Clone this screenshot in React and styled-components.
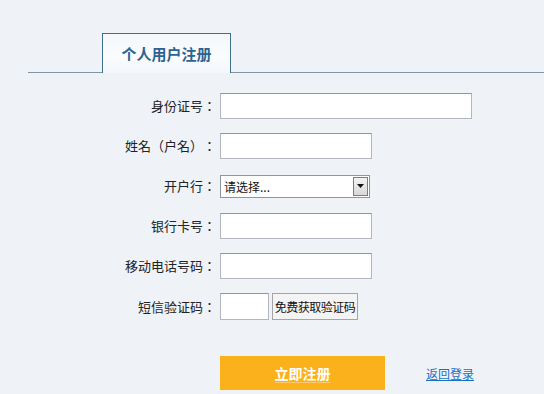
import React from "react";
import styled, { createGlobalStyle } from "styled-components";

const Global = createGlobalStyle`
  html, body { margin: 0; padding: 0; }
  body {
    background: #eff3f8;
    font-family: "Liberation Sans", "Noto Sans CJK SC", sans-serif;
    color: #222;
    width: 544px;
    height: 394px;
    overflow: hidden;
  }
`;

const Page = styled.div`
  padding-top: 33px;
`;

const TabBar = styled.div`
  display: flex;
  margin-left: 28px;
  padding-left: 74px;
  border-bottom: 1px solid #8095a4;
  height: 39px;
`;

const Tab = styled.div`
  width: 129px;
  height: 40px;
  box-sizing: border-box;
  border: 1px solid #3f7088;
  border-bottom: none;
  background: linear-gradient(#f4f8fb, #fafcfe 60%, #f3f7fb);
  display: flex;
  align-items: center;
  justify-content: center;
  font-family: "Noto Sans CJK SC", sans-serif;
  font-weight: 700;
  font-size: 15px;
  color: #2d6391;
  margin-bottom: -1px;
  padding-bottom: 1px;
`;

const Form = styled.div`
  display: grid;
  grid-template-columns: 216px 1fr;
  column-gap: 4px;
  row-gap: 14px;
  padding-top: 20px;
  align-items: center;
`;

const Label = styled.label`
  text-align: right;
  font-family: "Noto Sans CJK TC", "Noto Sans CJK SC", sans-serif;
  text-spacing-trim: space-all;
  font-size: 13px;
  color: #222;
  height: ${(p) => p.$h || 26}px;
  line-height: ${(p) => p.$h || 26}px;
`;

const Field = styled.div`
  display: flex;
  gap: 3px;
  align-items: center;
  height: ${(p) => p.$h || 26}px;
`;

const Input = styled.input`
  box-sizing: border-box;
  width: ${(p) => p.$w}px;
  height: ${(p) => p.$h || 26}px;
  border: 1px solid #b3b7bd;
  border-top-color: #8f959c;
  background: #fff;
  margin: 0;
  padding: 0 3px;
  outline: none;
`;

const Select = styled.div`
  box-sizing: border-box;
  width: 150px;
  height: 23px;
  border: 1px solid #8f959c;
  background: #fff;
  display: flex;
  align-items: center;
  justify-content: space-between;
  padding: 1px;
  font-family: "Noto Sans CJK SC", sans-serif;
  font-size: 12px;
  color: #111;
`;

const SelectText = styled.span`
  padding-left: 2px;
`;

const Arrow = styled.span`
  width: 15px;
  height: 19px;
  box-sizing: border-box;
  border: 1px solid #7d7d7d;
  background: linear-gradient(#f2f2f2, #d9d9d9);
  display: flex;
  align-items: center;
  justify-content: center;
`;

const SmsButton = styled.button`
  box-sizing: border-box;
  width: 86px;
  height: 27px;
  margin: 0;
  padding: 0;
  border: 1px solid #a5a5a5;
  background: #f4f4f4;
  font-family: "Noto Sans CJK SC", sans-serif;
  font-size: 12px;
  color: #111;
  letter-spacing: -0.5px;
`;

const Actions = styled.div`
  display: flex;
  align-items: center;
  padding-left: 220px;
  padding-top: 36px;
  gap: 41px;
`;

const Submit = styled.button`
  width: 165px;
  height: 34px;
  border: none;
  margin: 0;
  background: #fbb11b;
  color: #fff;
  font-family: "Noto Sans CJK SC", sans-serif;
  font-size: 14px;
  font-weight: 700;
  text-decoration: underline;
  text-decoration-color: rgba(255, 255, 255, 0.35);
  text-underline-offset: 3px;
`;

const BackLink = styled.a`
  font-family: "Noto Sans CJK SC", sans-serif;
  font-size: 12px;
  color: #1a6fc4;
  text-decoration: underline;
  margin-top: 1px;
`;

export default function App() {
  return (
    <>
      <Global />
      <Page>
        <TabBar>
          <Tab>个人用户注册</Tab>
        </TabBar>
        <Form>
          <Label>身份证号：</Label>
          <Field>
            <Input $w={252} />
          </Field>
          <Label>姓名（户名）：</Label>
          <Field>
            <Input $w={152} />
          </Field>
          <Label>开户行：</Label>
          <Field>
            <Select>
              <SelectText>请选择...</SelectText>
              <Arrow>
                <svg width="7" height="4" viewBox="0 0 7 4">
                  <path d="M0 0h7L3.5 4z" fill="#111" />
                </svg>
              </Arrow>
            </Select>
          </Field>
          <Label>银行卡号：</Label>
          <Field>
            <Input $w={152} />
          </Field>
          <Label>移动电话号码：</Label>
          <Field>
            <Input $w={152} />
          </Field>
          <Label $h={27}>短信验证码：</Label>
          <Field $h={27}>
            <Input $w={49} $h={27} />
            <SmsButton>免费获取验证码</SmsButton>
          </Field>
        </Form>
        <Actions>
          <Submit>立即注册</Submit>
          <BackLink href="#">返回登录</BackLink>
        </Actions>
      </Page>
    </>
  );
}
